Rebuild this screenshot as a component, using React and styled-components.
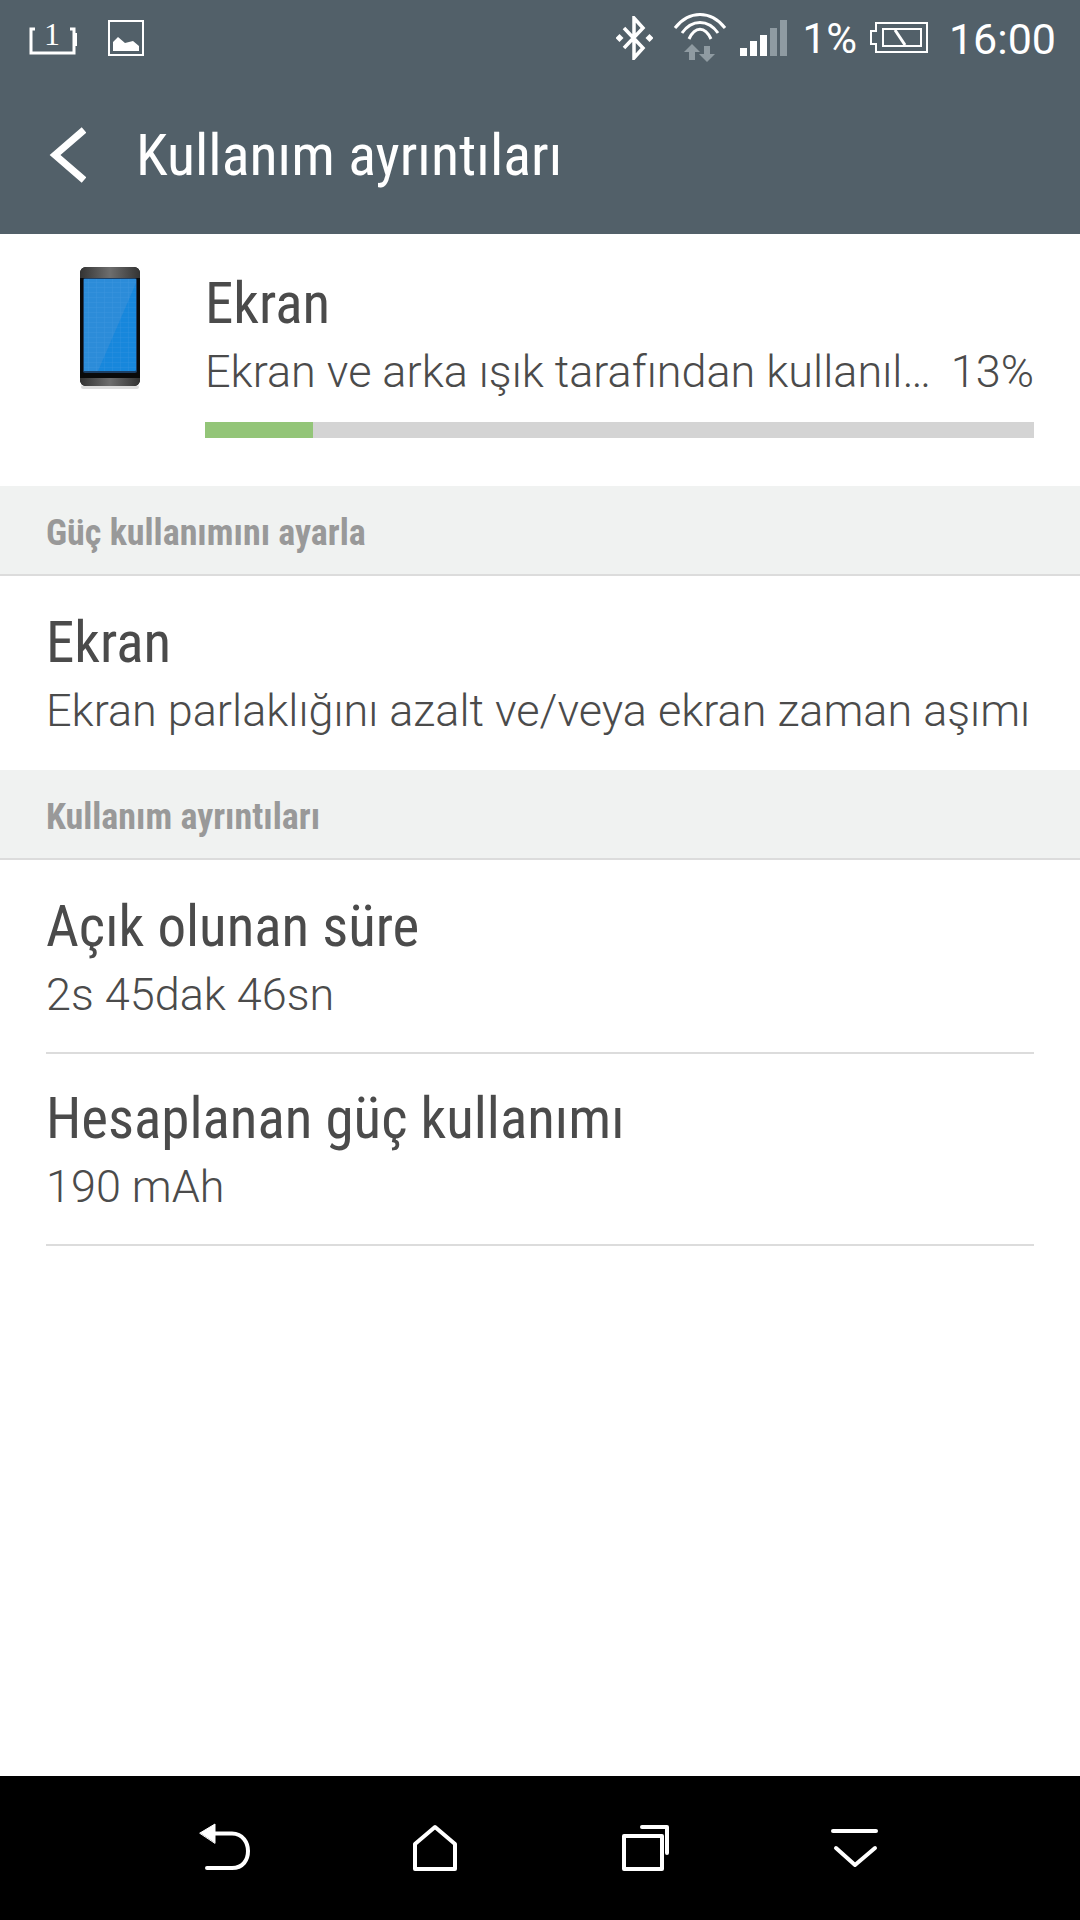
import React from "react";
import styled, { createGlobalStyle } from "styled-components";

const GlobalStyle = createGlobalStyle`
  html, body {
    margin: 0;
    padding: 0;
    background: #fff;
  }
`;

const Screen = styled.div`
  width: 1080px;
  height: 1920px;
  display: flex;
  flex-direction: column;
  overflow: hidden;
  background: #fff;
  color: #4b4b4b;
  font-family: Roboto, "Liberation Sans", sans-serif;
`;

const AppBar = styled.header`
  height: 234px;
  background: #526069;
  color: #fff;
  display: flex;
  flex-direction: column;
`;

const StatusBar = styled.div`
  height: 75px;
  padding: 0 24px 0 29px;
  display: flex;
  align-items: center;
  justify-content: space-between;
`;

const StatusGroup = styled.div`
  display: flex;
  align-items: center;
  gap: ${(p) => p.$gap || 0}px;
`;

const StatusText = styled.span`
  font-size: ${(p) => p.$size || 42}px;
  line-height: 48px;
  padding-top: 2px;
  font-weight: ${(p) => p.$weight || 400};
  margin-left: ${(p) => p.$ml || 0}px;
`;

const StatusIconSlot = styled.span`
  display: flex;
  margin-left: ${(p) => p.$ml || 0}px;
`;

const Toolbar = styled.div`
  flex: 1;
  display: flex;
  align-items: center;
  padding-left: 49px;
  gap: 50px;
`;

const Condensed = styled.div`
  font-family: "Roboto Condensed", Roboto, sans-serif;
  font-stretch: condensed;
  white-space: nowrap;
`;

const BarTitle = styled(Condensed)`
  font-size: 58px;
  line-height: 70px;
`;

const Content = styled.main`
  flex: 1;
  display: flex;
  flex-direction: column;
`;

const Summary = styled.section`
  height: 252px;
  box-sizing: border-box;
  padding: 35px 46px 0 80px;
  display: flex;
  gap: 65px;
`;

const SummaryIcon = styled.div`
  margin-top: -2px;
`;

const SummaryBody = styled.div`
  flex: 1;
  min-width: 0;
`;

const ItemTitle = styled(Condensed)`
  font-size: 57px;
  line-height: 69px;
`;

const SubRow = styled.div`
  display: flex;
  justify-content: space-between;
`;

const ItemSub = styled.div`
  font-size: 45px;
  font-weight: 300;
  line-height: 68px;
  white-space: nowrap;
`;

const Progress = styled.div`
  height: 16px;
  margin-top: 16px;
  background: #d4d4d4;
`;

const ProgressFill = styled.div`
  height: 100%;
  background: #93c578;
`;

const SectionHead = styled.div`
  height: 82px;
  padding: 6px 0 0 46px;
  display: flex;
  align-items: center;
  background: #f0f2f1;
  border-bottom: 2px solid #dcdcdc;
  color: #999;
`;

const SectionLabel = styled(Condensed)`
  font-size: 36px;
  font-weight: 700;
`;

const Row = styled.div`
  height: ${(p) => p.$height || 194}px;
  box-sizing: border-box;
  padding-top: ${(p) => p.$top || 32}px;
  margin: 0 46px;
  ${(p) => p.$line && "border-bottom: 2px solid #dcdcdc;"}
`;

const BottomNav = styled.nav`
  height: 144px;
  background: #000;
  display: grid;
  grid-template-columns: repeat(4, 210px);
  justify-content: center;
  align-items: center;
  justify-items: center;
`;

const NavStroke = styled.svg`
  fill: none;
  stroke: #fff;
  stroke-width: 4;
  stroke-linecap: round;
  stroke-linejoin: round;
`;

const SimIcon = () => (
  <svg width="50" height="44" viewBox="0 -5 50 44">
    <path d="M6 8H2V32H45V8H41" fill="none" stroke="#fff" strokeWidth="3" />
    <rect x="45" y="12" width="3" height="13" fill="#fff" />
    <text x="23" y="24" fontFamily="Liberation Serif" fontSize="32" fill="#fff" textAnchor="middle">1</text>
  </svg>
);

const PictureIcon = () => (
  <svg width="36" height="36" viewBox="0 0 36 36">
    <rect x="1" y="1" width="34" height="34" fill="none" stroke="#fff" strokeWidth="2" />
    <path d="M5 31V22L10 17L17 23L25 21L31 26V31Z" fill="#fff" />
  </svg>
);

const BluetoothIcon = () => (
  <svg width="37" height="44" viewBox="0 0 37 44">
    <path d="M8 12L27 32L18 42V2L27 12L8 32" fill="none" stroke="#fff" strokeWidth="3.5" />
    <path d="M3.5 18L7.5 22L3.5 26L-.5 22ZM33.5 18L37.5 22L33.5 26L29.5 22Z" fill="#fff" />
  </svg>
);

const WifiIcon = () => (
  <svg width="54" height="50" viewBox="0 0 54 50">
    <g fill="none" stroke="#fff" strokeWidth="3">
      <path d="M2 15C16 -3 38 -3 52 15" />
      <path d="M9 20C19 6 35 6 45 20" />
      <path d="M16 26C22 13 32 13 38 26" />
    </g>
    <path d="M19 31L27 39H22V47H16V39H11Z M34 49L42 41H37V33H31V41H26Z" fill="#8f9ba2" />
  </svg>
);

const SIGNAL_BARS = [
  { h: 8, on: true },
  { h: 15, on: true },
  { h: 21, on: true },
  { h: 28, on: false },
  { h: 36, on: false },
];

const SignalIcon = () => (
  <svg width="47" height="36" viewBox="0 0 47 36">
    {SIGNAL_BARS.map((b, i) => (
      <rect key={i} x={i * 10} y={36 - b.h} width="7" height={b.h} fill={b.on ? "#fff" : "#8f9ba2"} />
    ))}
  </svg>
);

const BatteryIcon = () => (
  <svg width="58" height="31" viewBox="0 0 58 31">
    <g fill="none" stroke="#fff" strokeWidth="2">
      <path d="M6 1H57V30H6V22H1V9H6Z" />
      <rect x="13" y="7" width="38" height="17" />
      <path d="M25 8L35 23" strokeWidth="3" />
    </g>
  </svg>
);

const BackChevron = () => (
  <svg width="37" height="56" viewBox="0 0 37 56" fill="none" stroke="#fff" strokeWidth="7">
    <path d="M35 3L6 28L35 53" />
  </svg>
);

const PhoneIcon = () => (
  <svg width="60" height="124" viewBox="0 0 60 124">
    <defs>
      <linearGradient id="bezel" x1="0" x2="1" y1="0" y2="0">
        <stop offset="0" stopColor="#333" />
        <stop offset="0.5" stopColor="#6e6e6e" />
        <stop offset="1" stopColor="#333" />
      </linearGradient>
      <pattern id="cells" width="8" height="5" patternUnits="userSpaceOnUse">
        <path d="M0 0H8M0 0V5" stroke="#5aa5e6" strokeWidth="1" opacity="0.3" />
      </pattern>
    </defs>
    <rect x="1" y="118" width="58" height="4" rx="2" fill="#ddd" />
    <rect x="0" y="0" width="60" height="119" rx="6" fill="#0a0a0a" />
    <path d="M0 11V6A6 6 0 0 1 6 0H54A6 6 0 0 1 60 6V11Z" fill="url(#bezel)" />
    <path d="M0 111H60V113A6 6 0 0 1 54 119H6A6 6 0 0 1 0 113Z" fill="url(#bezel)" />
    <rect x="3" y="11" width="54" height="95" rx="2" fill="#1b3f66" />
    <rect x="4" y="12" width="52" height="92" rx="1" fill="#1787dc" />
    <path d="M4 12H56V16L18 104H4Z" fill="#2c8cd9" />
    <rect x="4" y="12" width="52" height="92" fill="url(#cells)" />
  </svg>
);

const NavBack = () => (
  <NavStroke width="52" height="50" viewBox="0 0 52 50">
    <path d="M1 10L16 1V20Z" fill="#fff" stroke="#fff" strokeWidth="1" />
    <path d="M16 10.5H33C44 10.5 49 20 49 28C49 37 44 45 33 45H8" />
  </NavStroke>
);

const NavHome = () => (
  <NavStroke width="48" height="50" viewBox="0 0 48 50">
    <path d="M24 4L44 21V46H4V21Z" />
  </NavStroke>
);

const NavRecent = () => (
  <NavStroke width="51" height="50" viewBox="0 0 51 50">
    <rect x="4" y="13" width="38" height="33" />
    <path d="M22 4H47V30" />
  </NavStroke>
);

const NavMenu = () => (
  <NavStroke width="52" height="42" viewBox="0 0 52 42">
    <path d="M4 4H47" />
    <path d="M7 21L26 38L46 21" />
  </NavStroke>
);

const App = () => (
  <Screen>
    <GlobalStyle />
    <AppBar>
      <StatusBar>
        <StatusGroup $gap={29}>
          <SimIcon />
          <PictureIcon />
        </StatusGroup>
        <StatusGroup $gap={13}>
          <BluetoothIcon />
          <StatusIconSlot $ml={7}>
            <WifiIcon />
          </StatusIconSlot>
          <SignalIcon />
          <StatusText $ml={3} $size={42}>1%</StatusText>
          <BatteryIcon />
          <StatusText $ml={8} $size={43}>16:00</StatusText>
        </StatusGroup>
      </StatusBar>
      <Toolbar>
        <BackChevron />
        <BarTitle>Kullanım ayrıntıları</BarTitle>
      </Toolbar>
    </AppBar>
    <Content>
      <Summary>
        <SummaryIcon>
          <PhoneIcon />
        </SummaryIcon>
        <SummaryBody>
          <ItemTitle>Ekran</ItemTitle>
          <SubRow>
            <ItemSub>Ekran ve arka ışık tarafından kullanıl…</ItemSub>
            <ItemSub>13%</ItemSub>
          </SubRow>
          <Progress>
            <ProgressFill style={{ width: "13%" }} />
          </Progress>
        </SummaryBody>
      </Summary>
      <SectionHead>
        <SectionLabel>Güç kullanımını ayarla</SectionLabel>
      </SectionHead>
      <Row>
        <ItemTitle>Ekran</ItemTitle>
        <ItemSub>Ekran parlaklığını azalt ve/veya ekran zaman aşımı</ItemSub>
      </Row>
      <SectionHead>
        <SectionLabel>Kullanım ayrıntıları</SectionLabel>
      </SectionHead>
      <Row $line>
        <ItemTitle>Açık olunan süre</ItemTitle>
        <ItemSub>2s 45dak 46sn</ItemSub>
      </Row>
      <Row $line $height={192} $top={30}>
        <ItemTitle>Hesaplanan güç kullanımı</ItemTitle>
        <ItemSub>190 mAh</ItemSub>
      </Row>
    </Content>
    <BottomNav>
      <NavBack />
      <NavHome />
      <NavRecent />
      <NavMenu />
    </BottomNav>
  </Screen>
);

export default App;
